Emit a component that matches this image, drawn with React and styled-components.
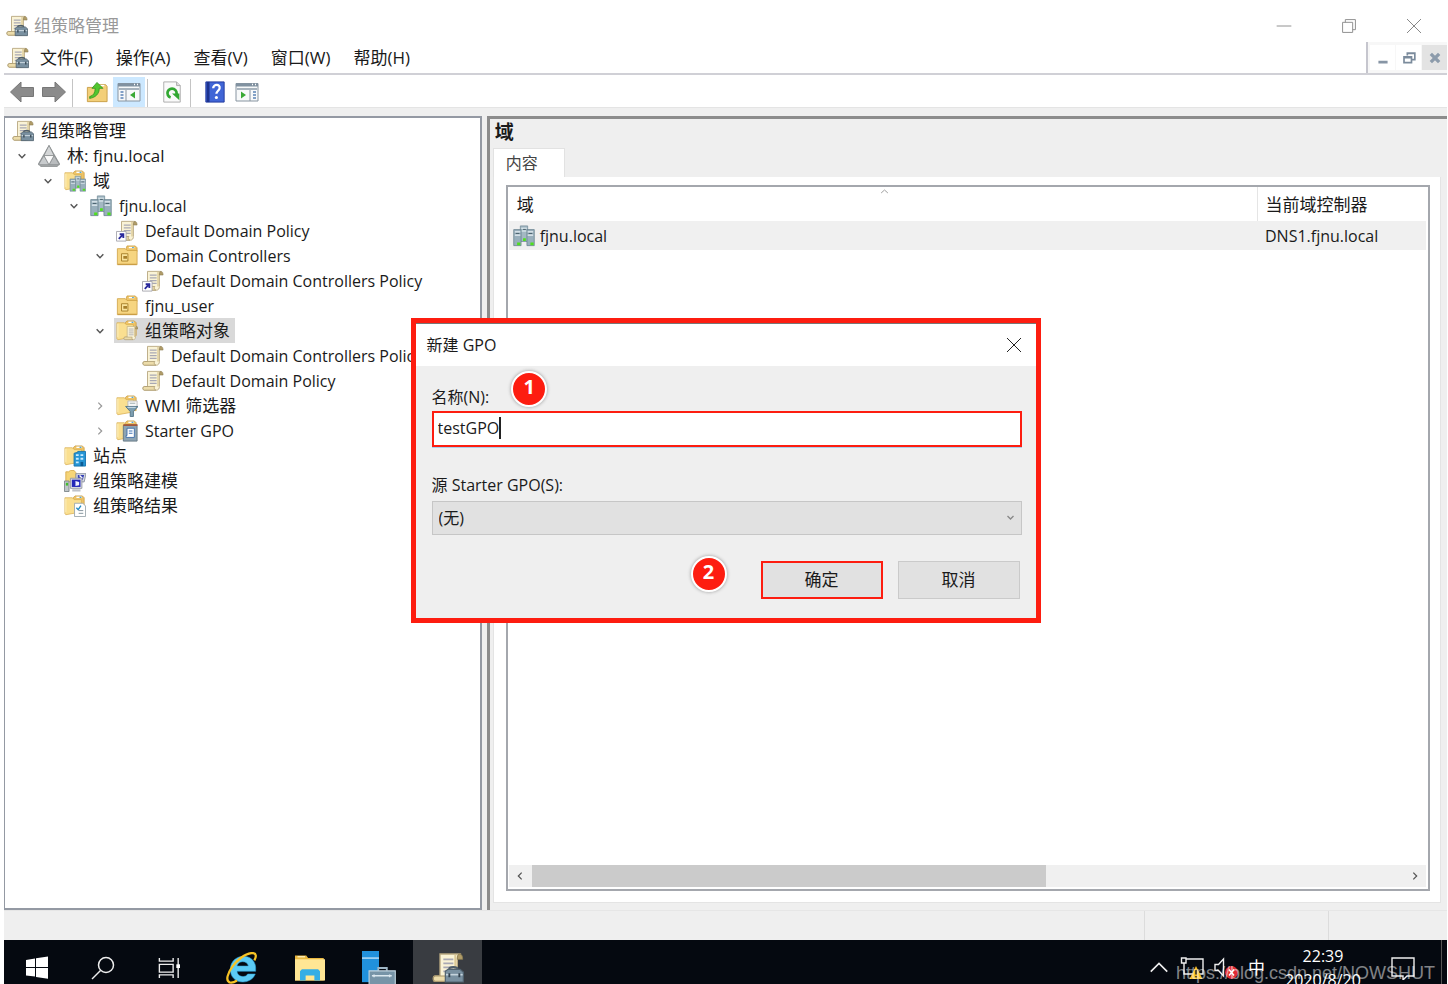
import React, { useState } from 'react';
import styled, { createGlobalStyle, css } from 'styled-components';

const tree = [
    { depth: 0, icon: 'gpmc', label: '组策略管理' },
    { depth: 1, icon: 'forest', label: '林: fjnu.local', open: true },
    { depth: 2, icon: 'domains', label: '域', open: true },
    { depth: 3, icon: 'servers', label: 'fjnu.local', open: true },
    { depth: 4, icon: 'link', label: 'Default Domain Policy' },
    { depth: 4, icon: 'ou', label: 'Domain Controllers', open: true },
    { depth: 5, icon: 'link', label: 'Default Domain Controllers Policy' },
    { depth: 4, icon: 'ou', label: 'fjnu_user' },
    { depth: 4, icon: 'gpos', label: '组策略对象', open: true, selected: true },
    { depth: 5, icon: 'scroll', label: 'Default Domain Controllers Policy' },
    { depth: 5, icon: 'scroll', label: 'Default Domain Policy' },
    { depth: 4, icon: 'wmi', label: 'WMI 筛选器', open: false },
    { depth: 4, icon: 'starter', label: 'Starter GPO', open: false },
    { depth: 2, icon: 'sites', label: '站点' },
    { depth: 2, icon: 'modeling', label: '组策略建模' },
    { depth: 2, icon: 'results', label: '组策略结果' },
];

const menus = ['文件(F)', '操作(A)', '查看(V)', '窗口(W)', '帮助(H)'];

const hasCjk = (text) => /[\u4e00-\u9fff]/.test(text);

/* ---------- icon pieces, all on a 24 x 24 grid ---------- */

const ScrollShape = () => (
    <g>
        <path d="M6 1.500h14.500c-1.500 1-1.500 2-1.500 4V18c0 2-1 4-3 4H2.500c-2 0-2-4 0-4H6z" fill="#faf3d6" stroke="#b9a981" strokeWidth="1" />
        <path d="M17.500 2v16" stroke="#dcc995" strokeWidth="1.500" />
        <path d="M19 5.500c0-2.500.5-4 1.800-4s2.200 1.500 2.200 4z" fill="#b09c68" stroke="#8c7c50" strokeWidth=".6" />
        <path d="M2.500 18H14c-1 1-1 3 1 4H2.500c-2 0-2-4 0-4z" fill="#ecdcaa" stroke="#a6946a" strokeWidth=".8" />
        <path d="M8.500 5.500h7.500M8.500 8.500h7.500M8.500 11.500h7.500M8.500 14.500h7.500" stroke="#a9a9b4" strokeWidth="1.300" />
    </g>
);

const Toolbox = () => (
    <g>
        <path d="M13 14v-1.500c0-1.500 6-1.500 6 0V14" fill="none" stroke="#4d5c68" strokeWidth="1.600" />
        <path d="M10 14.500l2-1.500h9l2.500 2v7.500H10z" fill="#7990a0" stroke="#51626f" strokeWidth=".9" />
        <path d="M10.500 17h12.500" stroke="#c6d4dd" strokeWidth="1.200" />
        <path d="M13 16v3M20.500 16v3" stroke="#31414e" strokeWidth="1.400" />
    </g>
);

const FolderShape = () => (
    <g>
        <path d="M10 3l2-2h8l2 2v14H10z" fill="#eec365" stroke="#c89a3e" strokeWidth=".8" />
        <path d="M13.500 2.500h6" stroke="#fff" strokeWidth="1.500" />
        <path d="M17 2.500h2" stroke="#3e9bd2" strokeWidth="1.300" />
        <path d="M1 3h8l2 2h8v13.500L2 21.500l-1-1z" fill="#fadf90" stroke="#d9ae51" strokeWidth=".8" />
        <path d="M2 4v15" stroke="#fff4c8" />
    </g>
);

const ServersShape = () => (
    <g>
        <path d="M8 1h8v17H8z" fill="#a3b8c3" stroke="#738b97" strokeWidth=".8" />
        <path d="M9 3.500h6M9 6.500h6" stroke="#eaf3f7" strokeWidth="1.200" />
        <path d="M11 4.800h3" stroke="#3f5663" />
        <path d="M.800 5h8v17.500h-8zM15.200 5h8v17.500h-8z" fill="#98afbc" stroke="#667f8c" strokeWidth=".8" />
        <path d="M2 7.500h6M2 11h6M16 7.500h6M16 11h6" stroke="#e6f0f4" strokeWidth="1.300" />
        <path d="M3 9.200h4M17 9.200h4" stroke="#3f5663" />
        <path d="M4.500 20.500h3.500M19 20.500h3.500M11 16h3" stroke="#4fe01c" strokeWidth="3" />
    </g>
);

const PanelShape = ({ flip }) => (
    <g>
        <path d="M1 3.500h22v17.500H1z" fill="#f7f9fa" stroke="#8794a0" />
        <path d="M1 3.500h22v3H1z" fill="#8192a1" />
        <path d="M2 8h20v2H2z" fill="#a7b3bd" />
        <path d="M17 4.500h1M20 4.500h1" stroke="#fff" strokeWidth="1.500" />
        {flip ? (
            <g>
                <path d="M15 10v11" stroke="#8794a0" />
                <path d="M18 12h3M18 15h3M18 18h3" stroke="#5b83b5" strokeWidth="1.500" />
                <path d="M6 11.500v7l5-3.500z" fill="#39a935" />
            </g>
        ) : (
            <g>
                <path d="M9 10v11" stroke="#8794a0" />
                <path d="M3.500 12h3M3.500 15h3M3.500 18h3" stroke="#5b83b5" strokeWidth="1.500" />
                <path d="M18 11.500v7L13 15z" fill="#39a935" />
            </g>
        )}
    </g>
);

const drawings = {
    gpmc: <g><ScrollShape /><Toolbox /></g>,
    forest: (
        <g stroke="#85898b" strokeWidth=".8" strokeLinejoin="round">
            <path d="M12 .500l11.500 20-2.500 3H3l-2.500-3z" fill="#a4a8aa" />
            <path d="M12 .500l5.500 11h-11z" fill="#d4d6d7" />
            <path d="M6.500 11.500L12 21.500H.500z" fill="#c8cbcd" />
            <path d="M17.500 11.500l6 10H12z" fill="#b9bcbe" />
            <path d="M6.500 11.500h11L12 21.500z" fill="#fafafa" />
        </g>
    ),
    domains: <g><FolderShape /><g transform="translate(6 6) scale(.76)"><ServersShape /></g></g>,
    servers: <ServersShape />,
    scroll: <ScrollShape />,
    link: (
        <g>
            <ScrollShape />
            <path d="M.500 12.500h10.500v10.500H.500z" fill="#fff" stroke="#a5a5ad" />
            <path d="M3 20.500l4.500-4.500M4 15.500h4v4" fill="none" stroke="#29299c" strokeWidth="2" />
        </g>
    ),
    ou: (
        <g>
            <path d="M11 4l1-3h9l2 2v4H11z" fill="#eec365" stroke="#c99b3e" strokeWidth=".8" />
            <path d="M14 2.800h6" stroke="#fff" strokeWidth="1.500" />
            <path d="M17.500 2.800h2" stroke="#3e9bd2" />
            <path d="M1.500 4h8.500l2 2H23v15.500H1.500z" fill="#f6d581" stroke="#d0a448" strokeWidth=".9" />
            <path d="M2 21h20.500" stroke="#c19238" />
            <path d="M6 9.500h7v8H6z" fill="#f9e39c" stroke="#a77f2a" />
            <path d="M8 12h4v3H8z" fill="#a77f2a" />
        </g>
    ),
    gpos: <g><FolderShape /><g transform="translate(8 6) scale(.7)"><ScrollShape /></g></g>,
    wmi: (
        <g>
            <FolderShape />
            <path d="M13 6.500h10v7H13z" fill="#f7f7f7" stroke="#b9b9b9" />
            <path d="M15 9h6" stroke="#9aa" />
            <path d="M10.500 12.500h13.500l-5 5.500v5.500h-3.500V18z" fill="#7d9fb2" stroke="#547588" />
            <path d="M12.500 13.500h9" stroke="#d3e3ec" />
        </g>
    ),
    starter: (
        <g>
            <FolderShape />
            <path d="M8 6h15v17H8z" fill="#8da4b3" stroke="#657783" />
            <path d="M8 5.500h15.500" stroke="#a2573b" strokeWidth="2" />
            <path d="M12 9h8v10h-9v-2h1z" fill="#fff" stroke="#3f6fa8" />
            <path d="M14 12h4M14 14.500h4" stroke="#3f74b7" strokeWidth="1.200" />
        </g>
    ),
    sites: (
        <g>
            <FolderShape />
            <path d="M11 9l4-1v-1h8.500v16H11z" fill="#2695d5" stroke="#1673ad" />
            <path d="M13 11h3M18 11h3M13 15h3M18 15h3M13 19h3" stroke="#c8ecff" strokeWidth="2" />
            <path d="M18 18.500h3V23h-3z" fill="#0c5c94" />
        </g>
    ),
    modeling: (
        <g>
            <path d="M2 2h3l2-1.500h4L13 3v10H2z" fill="#f6d577" stroke="#d9ae51" />
            <path d="M13 4h11l-2 9h-9z" fill="#d8dce5" stroke="#8b91a0" />
            <path d="M15 5.500h7l-1.500 5H15z" fill="#3540b5" />
            <path d="M17 6l3 3" stroke="#fff" strokeWidth="1.500" />
            <path d="M7 9h12.500v11H7z" fill="#e1e3e8" stroke="#9297a4" />
            <path d="M8.500 10.500h9.500V18.500H8.500z" fill="#2226b8" />
            <path d="M12.500 12v5.500l4-1V13z" fill="#eef0ff" />
            <path d="M9 21h9v2.500H9z" fill="#bfc2c8" />
            <path d="M.500 12h5v11.500h-5z" fill="#bfc6c9" stroke="#7d8689" />
            <path d="M2 15.500h2.500" stroke="#43bd2d" strokeWidth="3" />
        </g>
    ),
    results: (
        <g>
            <FolderShape />
            <path d="M11.500 9h9l3 3v11.500h-12z" fill="#fff" stroke="#9da7ad" />
            <path d="M13.500 14l2 2 3-4.500" fill="none" stroke="#238bc4" strokeWidth="1.500" />
            <path d="M16 17h5M16 20h5" stroke="#7d8d97" />
        </g>
    ),
    back: <path d="M.500 12L11 2v5.500h12.500v9H11V22z" fill="#8b8b8b" stroke="#777" />,
    forward: <path d="M23.500 12L13 2v5.500H.500v9H13V22z" fill="#8b8b8b" stroke="#777" />,
    up: (
        <g>
            <path d="M1.500 7h8l2-3h10l1.500 2v16.500H1.500z" fill="#f3cf78" stroke="#c79d45" />
            <path d="M14 5h6" stroke="#fff" strokeWidth="1.500" />
            <path d="M4 17c4-1 6-4 6-9H6.500L12 1.500 18.500 8H14.500c0 6-4 10-10.500 11z" fill="#52c62f" stroke="#2b8f1b" strokeWidth=".8" />
        </g>
    ),
    panelLeft: <PanelShape />,
    panelRight: <PanelShape flip />,
    refresh: (
        <g>
            <path d="M3 1h14l4 4v18H3z" fill="#fafafa" stroke="#a9a9a9" />
            <path d="M17 1v4h4" fill="#ddd" stroke="#a9a9a9" />
            <path d="M10.500 18a5 5 0 1 1 6-2.500" fill="none" stroke="#32a832" strokeWidth="3" />
            <path d="M12 13.500h8V21z" fill="#32a832" />
        </g>
    ),
    help: (
        <g>
            <path d="M2 1h20v22H2z" fill="#4065d6" stroke="#20379b" />
            <path d="M4.500 1v22" stroke="#1d338f" strokeWidth="3" />
            <path d="M10 8c0-5 8-5 7 0-.4 2.500-3.500 3-3.500 6" fill="none" stroke="#fff" strokeWidth="2.500" />
            <circle cx="13.500" cy="18" r="1.700" fill="#fff" />
        </g>
    ),
    // taskbar
    start: <path d="M1 4l9-1.500V11H1zM11 2.300L23 .5V11H11zM1 12h9v8.500L1 19.500zM11 12h12v10.800l-12-1.800z" fill="#fff" />,
    search: <g fill="none" stroke="#eee" strokeWidth="1.500"><circle cx="15" cy="9" r="7.500" /><path d="M9.500 14.500L1 23" /></g>,
    taskview: (
        <g fill="none" stroke="#eee" strokeWidth="1.500">
            <path d="M1.500 1v3.500h15V1M1.500 23v-3.500h15V23M1.500 8h15v8.500h-15zM22 1v22" />
            <path d="M20 8h4v4h-4z" fill="#fff" stroke="none" />
        </g>
    ),
    ie: (
        <g>
            <path d="M23 14.500H9c.4 4.500 6.500 5 8 2h5.700c-3 8.500-18.700 8.500-18.700-3.500C4 1 22-.5 23 11.500zM9 10.500h8.500c-.6-4.300-7.800-4.300-8.500 0z" fill="#5ccbf5" stroke="#2a9fd8" strokeWidth=".4" fillRule="evenodd" />
            <path d="M3.500 22.800C-3 20 10 1.500 20 .8c4-.2 3.500 3 2 5.500" fill="none" stroke="#f7c325" strokeWidth="1.700" />
            <path d="M3 22.700c2 .8 4 0 6-1.300" fill="none" stroke="#f7c325" strokeWidth="1.700" />
        </g>
    ),
    explorer: (
        <g>
            <path d="M0 2h9l1.500 2H23v18H0z" fill="#eab83f" />
            <path d="M2 3h6" stroke="#fff3c2" />
            <path d="M0 5h24v17H0z" fill="#ffe694" />
            <path d="M4 22v-7.500L5.500 13h13l1.500 1.500V22h-4.500v-4h-7v4z" fill="#35aee5" />
        </g>
    ),
    serverManager: (
        <g>
            <path d="M0 0h12v22H0z" fill="#2191dc" />
            <path d="M0 5h12" stroke="#bce0f7" />
            <path d="M11.500 14v-2h6v2" fill="none" stroke="#9fb6c5" strokeWidth="1.300" />
            <path d="M5 14h18.500v10H5z" fill="#7794a7" stroke="#c1d4df" strokeWidth=".8" />
            <path d="M7 17.500h14M8.500 16.500v2M19.500 16.500v2" stroke="#dce8ef" />
        </g>
    ),
    chevronUp: <path d="M3 16l9-9 9 9" fill="none" stroke="#eee" strokeWidth="1.800" />,
    network: (
        <g>
            <path d="M6 3h17v15H7M4 7v11h3M1.500 2h4.500v5H1.500z" fill="none" stroke="#eee" strokeWidth="1.400" />
            <path d="M16 10l6.500 13h-13z" fill="#f8bd21" />
            <path d="M16 14v4.500M16 20v1.500" stroke="#222" strokeWidth="1.500" />
        </g>
    ),
    speaker: (
        <g>
            <path d="M1 8.500h3.500l5-5.500v17l-5-5.500H1z" fill="none" stroke="#eee" strokeWidth="1.400" />
            <circle cx="17.500" cy="16.500" r="6.500" fill="#e12b32" />
            <path d="M15 13.500l5 6M20 13.500l-5 6" stroke="#fff" strokeWidth="1.500" />
        </g>
    ),
    notice: <path d="M1 2h22v18h-7l-4 4v-4H1z" fill="none" stroke="#eee" strokeWidth="1.400" />,
    // window buttons
    minimise: <path d="M4 12h16" stroke="currentColor" />,
    restore: <path d="M5 8h11v11H5zM8 8V5h11v11h-3" fill="none" stroke="currentColor" />,
    close: <path d="M5 5l14 14M19 5L5 19" stroke="currentColor" />,
    mdiMin: <path d="M7 15h10v3H7z" fill="#8795a5" />,
    mdiRestore: <path d="M10 9V6h9v8h-3M9 6.500h10M6 10.500h9v7H6zM6 11.500h9" fill="none" stroke="#7b8b9c" strokeWidth="2" />,
    mdiClose: <path d="M7 7l10 10M17 7L7 17" stroke="#8c9bab" strokeWidth="4" />,
    chevronDown: <path d="M4 8l8 8 8-8" fill="none" stroke="currentColor" strokeWidth="3.500" />,
    chevronRight: <path d="M8 4l8 8-8 8" fill="none" stroke="currentColor" strokeWidth="3" />,
    chevronLeft: <path d="M16 4l-8 8 8 8" fill="none" stroke="currentColor" strokeWidth="3" />,
    sort: <path d="M3 16l9-8 9 8" fill="none" stroke="currentColor" strokeWidth="2.500" />,
};

function Icon({ name, size = 22 }) {
    return (
        <Svg viewBox="0 0 24 24" width={size} height={size} aria-hidden="true">
            {drawings[name]}
        </Svg>
    );
}

function Dialog() {
    const [name, setName] = useState('testGPO');

    return (
        <DialogLayer>
            <DialogBox role="dialog" aria-labelledby="dialog-title">
                <DialogTitle>
                    <h2 id="dialog-title">新建 GPO</h2>
                    <DialogClose aria-label="关闭"><Icon name="close" size={24} /></DialogClose>
                </DialogTitle>
                <Form onSubmit={(e) => e.preventDefault()}>
                    <LabelLine>
                        <label htmlFor="gpo-name">名称(N):</label>
                        <Step>1</Step>
                    </LabelLine>
                    <NameField>
                        <NameInput id="gpo-name" value={name} onChange={(e) => setName(e.target.value)} />
                        <Caret />
                    </NameField>
                    <SourceLabel htmlFor="gpo-source">源 Starter GPO(S):</SourceLabel>
                    <SelectWrap>
                        <Select id="gpo-source" defaultValue="none">
                            <option value="none">(无)</option>
                        </Select>
                        <SelectArrow><Icon name="chevronDown" size={9} /></SelectArrow>
                    </SelectWrap>
                    <Actions>
                        <Step $lead>2</Step>
                        <Button type="submit" $marked>确定</Button>
                        <Button type="button">取消</Button>
                    </Actions>
                </Form>
            </DialogBox>
        </DialogLayer>
    );
}

function TreePane() {
    return (
        <TreeBox>
            <TreeList>
                {tree.map((node, i) => (
                    <TreeRow key={i} $depth={node.depth}>
                        {node.depth > 0 && (
                            <Toggle $open={node.open}>
                                {node.open !== undefined && <Icon name={node.open ? 'chevronDown' : 'chevronRight'} size={10} />}
                            </Toggle>
                        )}
                        <Node $selected={node.selected} $cjk={hasCjk(node.label)}>
                            <Icon name={node.icon} />
                            {node.label}
                        </Node>
                    </TreeRow>
                ))}
            </TreeList>
        </TreeBox>
    );
}

function ContentPane() {
    return (
        <Detail>
            <DetailTitle>域</DetailTitle>
            <Tab type="button">内容</Tab>
            <TabBody>
                <ListBox>
                    <SortMark><Icon name="sort" size={9} /></SortMark>
                    <Table>
                        <thead>
                            <tr>
                                <Th>域</Th>
                                <Th $narrow>当前域控制器</Th>
                            </tr>
                        </thead>
                        <tbody>
                            <tr>
                                <Td><Cell><Icon name="servers" />fjnu.local</Cell></Td>
                                <Td>DNS1.fjnu.local</Td>
                            </tr>
                        </tbody>
                    </Table>
                    <Scrollbar>
                        <ScrollButton aria-label="向左"><Icon name="chevronLeft" size={10} /></ScrollButton>
                        <Track><Thumb /></Track>
                        <ScrollButton aria-label="向右"><Icon name="chevronRight" size={10} /></ScrollButton>
                    </Scrollbar>
                </ListBox>
            </TabBody>
        </Detail>
    );
}

function Taskbar() {
    return (
        <Bar>
            <TaskGroup>
                <TaskButton aria-label="开始"><Icon name="start" size={24} /></TaskButton>
                <TaskButton aria-label="搜索"><Icon name="search" size={24} /></TaskButton>
                <TaskButton aria-label="任务视图"><Icon name="taskview" size={22} /></TaskButton>
            </TaskGroup>
            <TaskGroup>
                <TaskButton $app aria-label="Internet Explorer"><Icon name="ie" size={32} /></TaskButton>
                <TaskButton $app aria-label="文件资源管理器"><Icon name="explorer" size={30} /></TaskButton>
                <TaskButton $app aria-label="服务器管理器"><Icon name="serverManager" size={34} /></TaskButton>
                <TaskButton $app $active aria-label="组策略管理"><Icon name="gpmc" size={32} /></TaskButton>
            </TaskGroup>
            <Tray>
                <Icon name="chevronUp" />
                <Icon name="network" size={24} />
                <Icon name="speaker" size={24} />
                <span>中</span>
                <Clock>
                    <time>22:39</time>
                    <time>2020/8/20</time>
                </Clock>
                <Icon name="notice" size={24} />
                <ShowDesktop />
            </Tray>
            <Watermark>https://blog.csdn.net/NOWSHUT</Watermark>
        </Bar>
    );
}

export default function App() {
    return (
        <Screen>
            <GlobalStyle />
            <Window>
                <TitleBar>
                    <Icon name="gpmc" />
                    <Title>组策略管理</Title>
                    <WindowButton aria-label="最小化"><Icon name="minimise" size={22} /></WindowButton>
                    <WindowButton aria-label="还原"><Icon name="restore" size={22} /></WindowButton>
                    <WindowButton aria-label="关闭"><Icon name="close" size={24} /></WindowButton>
                </TitleBar>
                <MenuBar>
                    <Icon name="gpmc" />
                    <Menus>
                        {menus.map((menu) => <MenuButton key={menu}>{menu}</MenuButton>)}
                    </Menus>
                    <MdiButtons>
                        <MdiButton aria-label="最小化"><Icon name="mdiMin" /></MdiButton>
                        <MdiButton aria-label="还原"><Icon name="mdiRestore" size={20} /></MdiButton>
                        <MdiButton $grey aria-label="关闭"><Icon name="mdiClose" size={20} /></MdiButton>
                    </MdiButtons>
                </MenuBar>
                <Toolbar>
                    <ToolButton aria-label="后退"><Icon name="back" size={24} /></ToolButton>
                    <ToolButton aria-label="前进"><Icon name="forward" size={24} /></ToolButton>
                    <Divider />
                    <ToolButton aria-label="上一级"><Icon name="up" /></ToolButton>
                    <ToolButton $active aria-label="显示树"><Icon name="panelLeft" size={24} /></ToolButton>
                    <Divider />
                    <ToolButton aria-label="刷新"><Icon name="refresh" /></ToolButton>
                    <Divider />
                    <ToolButton aria-label="帮助"><Icon name="help" /></ToolButton>
                    <ToolButton aria-label="操作窗格"><Icon name="panelRight" size={24} /></ToolButton>
                </Toolbar>
                <Workspace>
                    <TreePane />
                    <ContentPane />
                </Workspace>
                <StatusBar>
                    <StatusCell $width={184} />
                    <StatusCell $width={119} />
                </StatusBar>
                <Dialog />
            </Window>
            <Taskbar />
        </Screen>
    );
}

const GlobalStyle = createGlobalStyle`
    * {
        box-sizing: border-box;
    }
    body {
        margin: 0;
        background: #fff;
        color: #1a1a1a;
        font-family: "Open Sans", "Noto Sans CJK SC", sans-serif;
        font-size: 16px;
        line-height: 24px;
    }
    button, input, select {
        font: inherit;
        color: inherit;
        border: 0;
        padding: 0;
        margin: 0;
        background: none;
        border-radius: 0;
    }
`;

const Svg = styled.svg`
    display: block;
    flex: none;
`;

const Screen = styled.div`
    display: flex;
    flex-direction: column;
    height: 100vh;
    padding: 0 1px 0 4px;
    overflow: hidden;
`;

const Window = styled.div`
    position: relative;
    flex: 1;
    min-height: 0;
    display: flex;
    flex-direction: column;
`;

const TitleBar = styled.header`
    display: flex;
    align-items: center;
    height: 42px;
    padding: 10px 1px 0 2px;
    color: #999;
`;

const Title = styled.h1`
    flex: 1;
    margin: 0 0 0 6px;
    font-size: 17px;
    font-weight: 400;
`;

const WindowButton = styled.button`
    display: flex;
    justify-content: center;
    width: 65px;
    color: #888;
`;

const MenuBar = styled.div`
    display: flex;
    align-items: center;
    height: 33px;
    padding-left: 3px;
    border-bottom: 2px solid #d0d0d6;
`;

const Menus = styled.nav`
    flex: 1;
    display: flex;
    gap: 23px;
    margin-left: 11px;
    font-size: 17px;
`;

const MenuButton = styled.button``;

const MdiButtons = styled.div`
    display: flex;
    gap: 1px;
    align-self: stretch;
    align-items: center;
    padding-left: 2px;
    border-left: 2px solid #c6c6ce;
    background: #f7f7f7;
`;

const MdiButton = styled.button`
    display: flex;
    align-items: center;
    justify-content: center;
    width: 25px;
    height: 25px;
    background: ${(p) => (p.$grey ? '#e3e3e3' : '#fff')};
`;

const Toolbar = styled.div`
    display: flex;
    align-items: flex-end;
    height: 33px;
    padding-left: 2px;
    border-bottom: 1px solid #e4e4e4;
`;

const ToolButton = styled.button`
    display: flex;
    align-items: center;
    justify-content: center;
    width: 32px;
    height: 30px;
    background: ${(p) => (p.$active ? '#cce8ff' : 'none')};
`;

const Divider = styled.div`
    width: 1px;
    height: 28px;
    margin: 0 8px 0 2px;
    background: #c4c4c4;
`;

const Workspace = styled.main`
    flex: 1;
    min-height: 0;
    display: flex;
    gap: 5px;
    padding-top: 8px;
    background: #efefef;
`;

const TreeBox = styled.section`
    flex: 0 0 33.1%;
    border: 2px solid #9499a3;
    border-left-width: 1px;
    background: #fff;
    overflow: hidden;
`;

const TreeList = styled.ul`
    margin: 0;
    padding: 0 0 0 7px;
    list-style: none;
`;

const TreeRow = styled.li`
    display: flex;
    align-items: center;
    height: 25px;
    margin-left: ${(p) => (p.$depth ? 0 : -2)}px;
    padding-left: ${(p) => Math.max(0, p.$depth - 1) * 26}px;
    white-space: nowrap;
`;

const Toggle = styled.span`
    flex: none;
    width: 24px;
    padding-left: 5px;
    color: ${(p) => (p.$open ? '#555' : '#999')};
`;

const Node = styled.span`
    display: flex;
    align-items: center;
    gap: 7px;
    height: 25px;
    padding: 0 5px 0 2px;
    font-size: ${(p) => (p.$cjk ? 17 : 16)}px;
    background: ${(p) => (p.$selected ? '#d9d9d9' : 'none')};
`;

const Detail = styled.section`
    flex: 1;
    min-width: 0;
    display: flex;
    flex-direction: column;
    align-items: flex-start;
    padding: 2px 6px 7px 3px;
    border-top: 3px solid #8c8c8c;
    border-left: 3px solid #8c8c8c;
`;

const DetailTitle = styled.h2`
    margin: 0 0 3px 2px;
    font-family: "Liberation Serif", "Noto Sans CJK SC", serif;
    font-size: 19px;
    line-height: 24px;
    font-weight: 700;
`;

const Tab = styled.button`
    height: 29px;
    width: 72px;
    padding: 0 12px;
    background: #fff;
    border: 1px solid #e2e2e2;
    border-bottom: 0;
    font-size: 16px;
    line-height: 22px;
    text-align: left;
    color: #444;
`;

const TabBody = styled.div`
    flex: 1;
    align-self: stretch;
    display: flex;
    padding: 8px 10px 11px 12px;
    background: #fff;
    border: 1px solid #e4e4e4;
    border-top: 0;
`;

const ListBox = styled.div`
    position: relative;
    flex: 1;
    display: flex;
    flex-direction: column;
    justify-content: space-between;
    padding: 0 2px 2px 1px;
    border: 2px solid #a4a7ad;
`;

const SortMark = styled.span`
    position: absolute;
    top: 0;
    left: 372px;
    color: #999;
`;

const Table = styled.table`
    width: 100%;
    border-collapse: collapse;
    text-align: left;
`;

const Th = styled.th`
    height: 34px;
    padding: 2px 8px 0;
    font-size: 17px;
    font-weight: 400;
    ${(p) => p.$narrow && css`
        width: 169px;
        border-left: 1px solid #e5e5e5;
    `}
`;

const Td = styled.td`
    height: 29px;
    padding: 0 8px;
    background: #f0f0f0;

    &:first-child {
        padding-left: 4px;
    }
`;

const Cell = styled.div`
    display: flex;
    align-items: center;
    gap: 5px;
`;

const Scrollbar = styled.div`
    display: flex;
    height: 22px;
    background: #f0f0f0;
`;

const ScrollButton = styled.button`
    display: flex;
    align-items: center;
    justify-content: center;
    width: 23px;
    color: #555;
`;

const Track = styled.div`
    flex: 1;
`;

const Thumb = styled.div`
    width: 59%;
    height: 100%;
    background: #cbcbcb;
`;

const StatusBar = styled.footer`
    display: flex;
    justify-content: flex-end;
    height: 30px;
    background: #efefef;
    border-top: 1px solid #e6e6e6;
`;

const StatusCell = styled.div`
    width: ${(p) => p.$width}px;
    border-left: 1px solid #dcdcdc;
`;

const DialogLayer = styled.div`
    position: absolute;
    inset: 0;
    display: flex;
    align-items: center;
    justify-content: center;
`;

const DialogBox = styled.section`
    width: 630px;
    border: 5px solid #fd1d10;
    background: #efefef;
`;

const DialogTitle = styled.header`
    display: flex;
    align-items: center;
    justify-content: space-between;
    height: 43px;
    padding: 0 10px 0 11px;
    background: #fff;
    border-top: 1px solid #777;

    h2 {
        margin: 0;
        font-size: 16px;
        font-weight: 400;
    }
`;

const DialogClose = styled.button`
    color: #222;
`;

const Form = styled.form`
    display: flex;
    flex-direction: column;
    padding: 3px 14px 14px 16px;
`;

const LabelLine = styled.div`
    display: flex;
    align-items: flex-end;
    gap: 22px;
    height: 42px;
    padding-bottom: 2px;
    font-size: 16px;

    > label {
        height: 24px;
    }
`;

const Step = styled.span`
    display: flex;
    align-items: center;
    justify-content: center;
    width: 36px;
    height: 36px;
    margin-bottom: 2px;
    padding-bottom: 3px;
    ${(p) => p.$lead && css`
        margin: 0 19px 12px 0;
    `}
    border: 2px solid #fff;
    border-radius: 50%;
    background: #fd1d10;
    box-shadow: 0 0 3px 1px #bbb;
    color: #fff;
    font-size: 20px;
    font-weight: 700;
`;

const NameField = styled.div`
    display: flex;
    align-items: center;
    height: 36px;
    padding: 0 0 2px 4px;
    border: 2px solid #fd1d10;
    background: #fff;
    box-shadow: 0 1px 0 #a9cfee;
`;

const NameInput = styled.input`
    field-sizing: content;
    outline: 0;
`;

const Caret = styled.span`
    width: 2px;
    height: 22px;
    background: #222;
`;

const SourceLabel = styled.label`
    margin: 26px 0 4px;
`;

const SelectWrap = styled.div`
    position: relative;
`;

const Select = styled.select`
    display: block;
    width: 100%;
    height: 34px;
    padding: 0 6px;
    appearance: none;
    background: #e1e1e1;
    border: 1px solid #c6c6c6;
`;

const SelectArrow = styled.span`
    position: absolute;
    top: 12px;
    right: 7px;
    color: #888;
    pointer-events: none;
`;

const Actions = styled.div`
    display: flex;
    justify-content: flex-end;
    align-items: center;
    gap: 15px;
    margin-top: 21px;
    padding-right: 2px;
`;

const Button = styled.button`
    width: 122px;
    height: 38px;
    background: #e1e1e1;
    border: ${(p) => (p.$marked ? '2px solid #fd1d10' : '1px solid #cacaca')};
    font-size: 17px;
`;

const Bar = styled.footer`
    position: relative;
    flex: none;
    display: flex;
    align-items: flex-start;
    gap: 4px;
    height: 44px;
    background: #050910;
    color: #fff;
    overflow: hidden;
`;

const TaskGroup = styled.div`
    display: flex;
`;

const TaskButton = styled.button`
    display: flex;
    align-items: center;
    justify-content: center;
    width: ${(p) => (p.$app ? 69 : 66)}px;
    height: 55px;
    background: ${(p) => (p.$active ? '#393c41' : 'none')};
`;

const Tray = styled.div`
    flex: 1;
    display: flex;
    align-items: center;
    justify-content: flex-end;
    gap: 10px;
    height: 55px;
    font-size: 17px;
`;

const Clock = styled.div`
    display: flex;
    flex-direction: column;
    align-items: center;
    width: 80px;
    margin: 0 18px 0 8px;
    font-size: 16px;
`;

const ShowDesktop = styled.span`
    width: 6px;
    height: 55px;
    margin-left: 16px;
    border-left: 1px solid #555;
`;

const Watermark = styled.span`
    position: absolute;
    right: 12px;
    bottom: -1px;
    color: rgba(255, 255, 255, 0.5);
    font-family: "Liberation Sans", sans-serif;
    font-size: 18px;
`;
